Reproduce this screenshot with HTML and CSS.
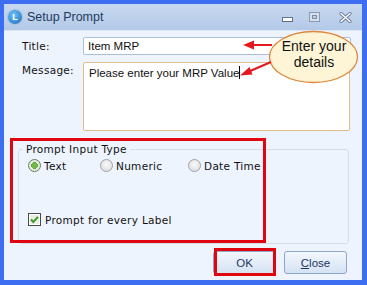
FILE: index.html
```html
<!DOCTYPE html>
<html lang="en">
<head>
    <meta charset="UTF-8">
    <title>Setup Prompt</title>
    <link rel="stylesheet" href="styles.css">
</head>
<body>
    <div class="window">
        <div class="titlebar">
            <span class="app-icon">L</span>
            <span class="title-text">Setup Prompt</span>
            <div class="win-btns">
                <span class="btn-min"></span>
                <span class="btn-max"></span>
                <svg class="btn-close" width="13" height="11" viewBox="0 0 13 11">
                    <path d="M2 1.5 L11 9.5 M11 1.5 L2 9.5" stroke="#6a7f9e" stroke-width="3.2" stroke-linecap="round"/>
                    <path d="M2 1.5 L11 9.5 M11 1.5 L2 9.5" stroke="#fff" stroke-width="1.4" stroke-linecap="round"/>
                </svg>
            </div>
        </div>

        <div class="content">
            <div class="field-row">
                <label class="field-label">Title:</label>
                <div class="text-input">Item MRP</div>
            </div>
            <div class="field-row msg-row">
                <label class="field-label">Message:</label>
                <div class="text-area">Please enter your MRP Value<span class="caret"></span></div>
            </div>

            <fieldset class="group">
                <legend>Prompt Input Type</legend>
                <div class="radio-row">
                    <span class="radio-item w-text"><span class="radio checked"></span>Text</span>
                    <span class="radio-item w-num"><span class="radio"></span>Numeric</span>
                    <span class="radio-item"><span class="radio"></span>Date Time</span>
                </div>
                <div class="check-row">
                    <svg class="check" width="13" height="13" viewBox="0 0 13 13">
                        <rect x="0.5" y="0.5" width="12" height="12" fill="#fff" stroke="#4a4a4a"/>
                        <rect x="2" y="2" width="9" height="9" fill="#e9efe6"/>
                        <path d="M3 6.5 L5.3 9 L10 3.8" fill="none" stroke="#3f9a2c" stroke-width="2"/>
                    </svg>
                    Prompt for every Label
                </div>
            </fieldset>

            <div class="button-row">
                <button class="dlg-btn">OK</button>
                <button class="dlg-btn"><u>C</u>lose</button>
            </div>
        </div>

        <!-- annotations drawn over the dialog -->
        <div class="mark mark-group"></div>
        <div class="mark mark-ok"></div>
        <svg class="callout" width="367" height="285" viewBox="0 0 367 285">
            <ellipse cx="313.5" cy="57" rx="44" ry="25.5" fill="#fdf5d6" stroke="#e0873a" stroke-width="1.3"/>
            <text x="314" y="51" text-anchor="middle">Enter your</text>
            <text x="314" y="67" text-anchor="middle">details</text>
            <path d="M272 45 L252 45" stroke="#e5171f" stroke-width="2"/>
            <path d="M243 45 L254 40.5 L254 49.5 Z" fill="#e5171f"/>
            <path d="M271 62 L249 71.5" stroke="#e5171f" stroke-width="2"/>
            <path d="M240 75.5 L249.5 67 L252.5 74.5 Z" fill="#e5171f"/>
        </svg>
    </div>
</body>
</html>
```

FILE: styles.css
```css
body { margin: 0; background: #fff; font-family: "DejaVu Sans", Verdana, sans-serif; }
.window { position: relative; width: 367px; height: 285px; box-sizing: border-box; border: 4px solid #3d6ef2; border-right-width: 5px; border-bottom-width: 5px; display: flex; flex-direction: column; background: #eef4fe; }

.titlebar { height: 26px; display: flex; align-items: center; padding-left: 4px; background: linear-gradient(#c8d9ef, #b3c9e7); }
.app-icon { width: 14px; height: 14px; border-radius: 50%; background: radial-gradient(circle at 40% 35%, #6fc3f7, #1566c0); color: #fff; font: bold 9px "Liberation Sans", Arial, sans-serif; display: flex; align-items: center; justify-content: center; box-shadow: 0 0 0 1px #a9c2de; }
.title-text { margin-left: 5px; font: 12.5px "Liberation Sans", Arial, sans-serif; color: #1f3a60; }
.win-btns { margin-left: auto; display: flex; align-items: center; }
.btn-min { width: 9px; height: 3px; border: 1px solid #5d7190; background: #fff; margin-top: 5px; }
.btn-max { width: 9px; height: 8px; margin-left: 16px; border: 1px solid #8d9bb0; background: #c4d0e0; box-shadow: inset 0 0 0 2px #d7e0ec, inset 0 0 0 3px #7d8ca3; }
.btn-close { margin-left: 19px; margin-right: 10px; }

.content { flex: 1; display: flex; flex-direction: column; border-top: 1px solid #dbe6f6; font-size: 10.5px; color: #111; }
.field-row { display: flex; align-items: center; padding-left: 18px; margin-top: 6px; }
.msg-row { align-items: flex-start; margin-top: 7px; }
.field-label { width: 61px; letter-spacing: 0.3px; }
.msg-row .field-label { padding-top: 2px; }
.text-input { height: 16px; border: 1px solid #a9bfdc; border-radius: 2px; background: #fff; font: 11.5px "Liberation Sans", Arial, sans-serif; padding-left: 4px; line-height: 16px; width: 262px; }
.text-area { width: 260px; height: 64px; border: 1px solid #e3bd8f; border-radius: 2px; background: #fff; font: 11.5px "Liberation Sans", Arial, sans-serif; padding: 3px 0 0 5px; line-height: 14px; }
.caret { display: inline-block; width: 1px; height: 13px; background: #000; vertical-align: -2px; }

.group { margin: 12px 0 0 14px; width: 331px; height: 101px; box-sizing: border-box; border: 1px solid #d3ddeb; border-radius: 3px; padding: 0 0 0 9px; }
.group legend { padding: 0 3px; margin-left: -5px; letter-spacing: 0.3px; }
.radio-row { display: flex; align-items: center; margin-top: 4px; }
.radio-item { display: flex; align-items: center; gap: 3px; letter-spacing: 0.3px; }
.w-text { width: 72px; }
.w-num { width: 88px; }
.radio { width: 11px; height: 11px; border-radius: 50%; border: 1px solid #9da3ab; background: radial-gradient(circle at 50% 40%, #fafafa, #d8d8d8); }
.radio.checked { border-color: #6c7a66; background: radial-gradient(circle, #74b94c 0 2.8px, #5a9a38 3.2px, #e8f2e0 3.6px, #d6e2d0); }
.check-row { display: flex; align-items: center; gap: 4px; margin-top: 41px; letter-spacing: 0.3px; }

.button-row { display: flex; justify-content: flex-end; gap: 8px; margin: 7px 15px 0 0; }
.dlg-btn { width: 63px; height: 23px; border: 1px solid #8ea7c9; border-radius: 3px; background: linear-gradient(#f3f7fd, #d5e2f3); font: 11.5px "Liberation Sans", Arial, sans-serif; color: #1d3660; padding: 0; }

.mark { position: absolute; border: 3px solid #e0060f; }
.mark-group { left: 6px; top: 134px; width: 250px; height: 99px; }
.mark-ok { left: 210px; top: 244px; width: 56px; height: 22px; }
.callout { position: absolute; left: -4px; top: -4px; pointer-events: none; }
.callout text { font: 14px "Liberation Sans", Arial, sans-serif; fill: #111; }
```
